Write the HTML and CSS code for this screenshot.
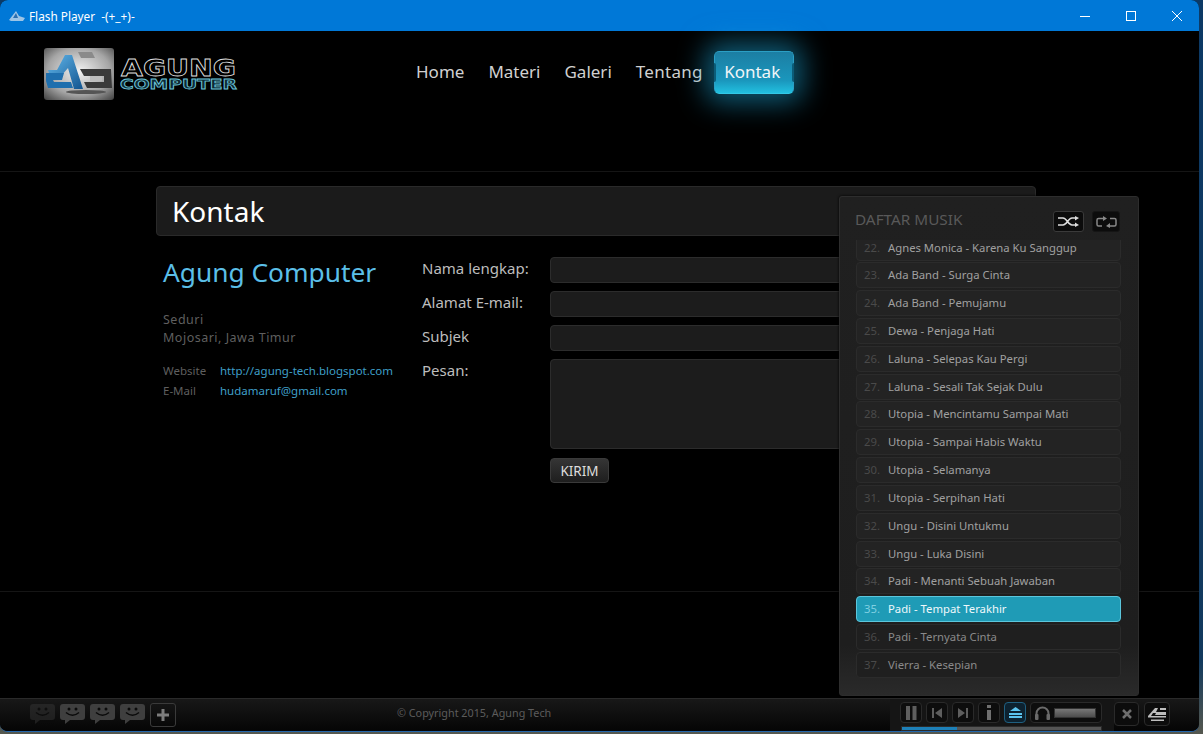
FILE: index.html
```html
<!DOCTYPE html>
<html lang="id">
<head>
<meta charset="utf-8">
<title>Flash Player -(+_+)-</title>
<link rel="stylesheet" href="styles.css">
</head>
<body>
<div class="window">
  <div class="titlebar">
    <svg class="app-icon" width="18" height="12" viewBox="0 0 18 12"><path d="M1 10 L8 1 L11 6 L17 8 L15 11 L3 11Z" fill="#9cc4e6"/><path d="M5 8 L8 3 L10 8Z" fill="#2a6fb0"/></svg>
    <span class="title-text">Flash Player&nbsp; -(+_+)-</span>
    <div class="win-controls">
      <svg width="12" height="12" viewBox="0 0 12 12"><path d="M1 6.5H11" stroke="#fff" fill="none"/></svg>
      <svg width="12" height="12" viewBox="0 0 12 12"><rect x="1.5" y="1.5" width="9" height="9" stroke="#fff" fill="none"/></svg>
      <svg width="12" height="12" viewBox="0 0 12 12"><path d="M1 1L11 11M11 1L1 11" stroke="#fff" fill="none"/></svg>
    </div>
  </div>

  <header class="site-header">
    <div class="logo">
      <svg class="logo-tile" width="70" height="52" viewBox="0 0 70 52">
        <defs>
          <radialGradient id="tile" cx="50%" cy="45%" r="75%"><stop offset="0" stop-color="#f2f2f2"/><stop offset=".6" stop-color="#a5a5a5"/><stop offset="1" stop-color="#3c3c3c"/></radialGradient>
          <linearGradient id="ablue" x1="0" y1="0" x2="1" y2="1"><stop offset="0" stop-color="#62b8ec"/><stop offset="1" stop-color="#12548f"/></linearGradient>
        </defs>
        <rect width="70" height="52" rx="3" fill="url(#tile)"/>
        <path d="M34 4H48L51 10H37Z" fill="#8a8a8a"/>
        <path d="M36 21H67L68 40H43L40 34H60V28H40Z" fill="#3a3a3a"/>
        <path d="M46 28H58V33H46Z" fill="#bdbdbd"/>
        <path d="M21 7H28L39 41H30L24 20L17 28H6L4 22H13Z" fill="url(#ablue)"/>
        <path d="M2 25H20L18 32H9L10 34H27L29 40H4L2 33Z" fill="#1f6fae"/>
        <ellipse cx="42" cy="44" rx="20" ry="2" fill="#555"/>
      </svg>
      <svg class="logo-word" width="118" height="46" viewBox="0 0 118 46">
        <text class="logo-agung" x="1" y="27.500" textLength="115" lengthAdjust="spacingAndGlyphs">AGUNG</text>
        <text class="logo-computer" x="0" y="41" textLength="117" lengthAdjust="spacingAndGlyphs">COMPUTER</text>
      </svg>
    </div>
    <nav class="nav">
      <a>Home</a>
      <a>Materi</a>
      <a>Galeri</a>
      <a>Tentang</a>
      <a class="active">Kontak</a>
    </nav>
  </header>

  <main class="section">
    <h1 class="page-title">Kontak</h1>
    <div class="columns">
      <div class="contact">
        <h2>Agung Computer</h2>
        <p class="address">Seduri<br>Mojosari, Jawa Timur</p>
        <div class="meta"><span>Website</span><a>http://agung-tech.blogspot.com</a></div>
        <div class="meta"><span>E-Mail</span><a>hudamaruf@gmail.com</a></div>
      </div>
      <form class="form">
        <label>Nama lengkap:</label><div class="field"></div>
        <label>Alamat E-mail:</label><div class="field"></div>
        <label>Subjek</label><div class="field"></div>
        <label>Pesan:</label><div class="field area"></div>
        <span></span><div><button type="button" class="send">KIRIM</button></div>
      </form>
    </div>
  </main>

  <div class="spacer"></div>

  <footer class="footer">
    <div class="smileys">
      <svg class="smiley dim" viewBox="0 0 25 20"><use href="#smile"/></svg>
      <svg class="smiley" viewBox="0 0 25 20"><use href="#smile"/></svg>
      <svg class="smiley" viewBox="0 0 25 20"><use href="#smile"/></svg>
      <svg class="smiley" viewBox="0 0 25 20"><use href="#smile"/></svg>
      <div class="plus"><svg width="12" height="12" viewBox="0 0 12 12"><path d="M6 0V12M0 6H12" stroke="#7c7c7c" stroke-width="3"/></svg></div>
    </div>
    <div class="copyright">© Copyright 2015, Agung Tech</div>
    <div class="player">
      <div class="controls">
        <div class="pbtn"><svg width="14" height="14" viewBox="0 0 14 14"><path d="M2 0H6V14H2ZM8.500 0H12.500V14H8.500Z" fill="#5e5e5e"/></svg></div>
        <div class="pbtn w"><svg width="10" height="10" viewBox="0 0 10 10"><path d="M0 0H2V10H0ZM10 0V10L3 5Z" fill="#5e5e5e"/></svg></div>
        <div class="pbtn w"><svg width="10" height="10" viewBox="0 0 10 10"><path d="M0 0L7 5L0 10ZM8 0H10V10H8Z" fill="#5e5e5e"/></svg></div>
        <div class="pbtn w"><svg width="6" height="15" viewBox="0 0 6 15"><path d="M1 0H5V3H1ZM1 5H5V15H1Z" fill="#707070"/></svg></div>
        <div class="pbtn w on"><svg width="13" height="11" viewBox="0 0 13 11"><path d="M6.500 0L12 4H1Z" fill="#5cc3ee"/><path d="M0 6H13V8H0ZM0 9H13V11H0Z" fill="#5cc3ee"/></svg></div>
        <div class="pbtn vol">
          <svg width="15" height="14" viewBox="0 0 15 14"><path d="M1.500 12V7.500a6 6 0 0 1 12 0V12" stroke="#6a6a6a" stroke-width="2" fill="none"/><rect x="0" y="8" width="3.500" height="6" rx="1" fill="#6a6a6a"/><rect x="11.500" y="8" width="3.500" height="6" rx="1" fill="#6a6a6a"/></svg>
          <div class="vol-bar"></div>
        </div>
      </div>
      <div class="progress"><div class="progress-fill"></div></div>
    </div>
    <div class="pbtn side close"><svg width="10" height="10" viewBox="0 0 10 10"><path d="M1 1L9 9M9 1L1 9" stroke="#6e6e6e" stroke-width="2.500"/></svg></div>
    <div class="pbtn side brand"><svg width="20" height="15" viewBox="0 0 20 15"><path d="M1 9L8 1H11L9 5H19V3H13V1H19V8H8L9 6H6L4 9H19V10.500H1ZM4 12.500H17V14H4Z" fill="#bdbdbd"/></svg></div>
  </footer>

  <aside class="music">
    <div class="music-head">
      <span class="music-title">DAFTAR MUSIK</span>
      <div class="mbtn on"><svg width="21" height="11" viewBox="0 0 21 11"><path d="M0 2H5C9 2 10 9 14 9H18M0 9H5C9 9 10 2 14 2H18" stroke="#ddd" stroke-width="1.500" fill="none"/><path d="M17 0L21 2L17 4.500ZM17 6.500L21 9L17 11Z" fill="#ddd"/></svg></div>
      <div class="mbtn"><svg width="21" height="12" viewBox="0 0 21 12"><path d="M8 2.500H2.500Q1 2.500 1 4V8.500Q1 10 2.500 10H6M13 10H18.500Q20 10 20 8.500V4Q20 2.500 18.500 2.500H14" stroke="#888" stroke-width="1.500" fill="none"/><path d="M7 0L11 2.500L7 5ZM14 7L10 10L14 12Z" fill="#888"/></svg></div>
    </div>
    <div class="list-clip">
      <ol class="tracks">
        <li><b>22.</b>Agnes Monica - Karena Ku Sanggup</li>
        <li><b>23.</b>Ada Band - Surga Cinta</li>
        <li><b>24.</b>Ada Band - Pemujamu</li>
        <li><b>25.</b>Dewa - Penjaga Hati</li>
        <li><b>26.</b>Laluna - Selepas Kau Pergi</li>
        <li><b>27.</b>Laluna - Sesali Tak Sejak Dulu</li>
        <li><b>28.</b>Utopia - Mencintamu Sampai Mati</li>
        <li><b>29.</b>Utopia - Sampai Habis Waktu</li>
        <li><b>30.</b>Utopia - Selamanya</li>
        <li><b>31.</b>Utopia - Serpihan Hati</li>
        <li><b>32.</b>Ungu - Disini Untukmu</li>
        <li><b>33.</b>Ungu - Luka Disini</li>
        <li><b>34.</b>Padi - Menanti Sebuah Jawaban</li>
        <li class="current"><b>35.</b>Padi - Tempat Terakhir</li>
        <li><b>36.</b>Padi - Ternyata Cinta</li>
        <li><b>37.</b>Vierra - Kesepian</li>
      </ol>
    </div>
  </aside>
</div>

<svg class="defs" width="0" height="0">
  <symbol id="smile" viewBox="0 0 25 20">
    <path d="M3 0H22Q25 0 25 3V13Q25 16 22 16H10L5 20V16H3Q0 16 0 13V3Q0 0 3 0Z" fill="#3f3f3f"/>
    <circle cx="9" cy="5" r="1.500" fill="#0a0a0a"/><circle cx="16" cy="5" r="1.500" fill="#0a0a0a"/>
    <path d="M6 8.500Q12.500 14 19 8.500" stroke="#0a0a0a" stroke-width="1.500" fill="none"/>
  </symbol>
</svg>
</body>
</html>
```
FILE: styles.css
```css
* { box-sizing: border-box; }
html, body { margin: 0; height: 100%; }
body {
  background: linear-gradient(180deg, #0c3a66, #123a5e 90%, #55584f);
  overflow: hidden;
  font-family: "Noto Sans", "Open Sans", sans-serif;
}
.defs { position: absolute; }
.window {
  position: relative;
  width: 1199px;
  height: 732px;
  background: #000;
  display: flex;
  flex-direction: column;
  border-bottom: 1px solid #2467ad;
  border-radius: 8px;
  overflow: hidden;
}
.titlebar {
  height: 31px;
  flex: none;
  background: #0078d7;
  display: flex;
  align-items: center;
  padding-left: 8px;
  color: #fff;
  font: 11.8px "Noto Sans", sans-serif;
}
.app-icon { margin-right: 3px; }
.win-controls {
  margin-left: auto;
  display: flex;
  gap: 34px;
  padding-right: 16px;
}
.site-header {
  height: 141px;
  flex: none;
  display: flex;
  align-items: flex-start;
  padding: 17px 0 0 44px;
  border-bottom: 1px solid #151515;
}
.logo { display: flex; width: 372px; flex: none; }
.logo-tile { flex: none; }
.logo-word { margin: 0 0 0 6px; flex: none; }
.logo-agung { font: 700 23px "DejaVu Sans", sans-serif; fill: #000; stroke: #ddd; stroke-width: .8; }
.logo-computer { font: 700 14px "DejaVu Sans", sans-serif; fill: #0d2a35; stroke: #6cc3d8; stroke-width: .8; }
.nav {
  display: flex;
  align-items: center;
  height: 43px;
  margin-top: 3px;
  font-size: 17px;
  color: #d0d0d0;
}
.nav a { margin-right: 24px; padding-bottom: 2px; }
.nav a:nth-child(4) { margin-right: 11px; letter-spacing: .28px; }
.nav .active {
  position: relative;
  width: 80px;
  height: 43px;
  margin: 0;
  padding-right: 3px;
  display: flex;
  align-items: center;
  justify-content: center;
  color: #f2f6f8;
  border-radius: 5px;
  border: 1px solid #2b9fc5;
  border-bottom-color: #33c8e6;
  background: linear-gradient(180deg, #1c7ea3, #1a97bd 70%, #22c0e0);
  box-shadow: 0 0 28px 8px rgba(28, 170, 220, .55);
}
.nav .active::before,
.nav .active::after {
  content: "";
  position: absolute;
  top: 11px;
  bottom: 11px;
  width: 2px;
  background: #0b5c78;
}
.nav .active::before { left: -1px; border-radius: 0 2px 2px 0; }
.nav .active::after { right: -1px; border-radius: 2px 0 0 2px; }
.section {
  height: 420px;
  flex: none;
  padding: 14px 0 0 156px;
  border-bottom: 1px solid #151515;
}
.page-title {
  width: 880px;
  height: 50px;
  margin: 0;
  padding-left: 15px;
  background: #1b1b1b;
  border: 1px solid #2a2a2a;
  border-radius: 4px;
  color: #fff;
  font-size: 28px;
  font-weight: 400;
  line-height: 48px;
}
.columns { display: flex; padding-top: 20px; }
.contact { width: 266px; flex: none; padding-left: 7px; }
.contact h2 {
  margin: 0 0 23px;
  font-size: 26.3px;
  font-weight: 400;
  line-height: 32px;
  color: #5bbfe8;
}
.address {
  margin: 0 0 14px;
  font-size: 12.5px;
  line-height: 18px;
  color: #5f5f5f;
  letter-spacing: .5px;
}
.meta {
  display: flex;
  height: 20px;
  align-items: center;
  padding-bottom: 1px;
  font-size: 11.500px;
  color: #5f5f5f;
}
.meta span { width: 57px; flex: none; }
.meta a { color: #3f9fc8; }
.form {
  display: grid;
  grid-template-columns: 128px 480px;
  grid-auto-rows: min-content;
  row-gap: 8px;
  padding-top: 1px;
  font-size: 15px;
  color: #bdbdbd;
}
.form label { line-height: 22px; }
.field {
  height: 26px;
  background: #1c1c1c;
  border: 1px solid #2c2c2c;
  border-radius: 4px;
}
.field.area { height: 90px; }
.send {
  display: block;
  width: 59px;
  height: 25px;
  margin-top: 1px;
  padding: 0;
  background: linear-gradient(180deg, #353535, #1e1e1e);
  border: 1px solid #3a3a3a;
  border-radius: 4px;
  color: #ddd;
  font: 13.500px "Noto Sans", sans-serif;
}
.spacer { flex: 1; }
.footer {
  height: 33px;
  flex: none;
  display: flex;
  align-items: flex-start;
  padding: 4px 0 0 30px;
  background: linear-gradient(180deg, #181818, #050505);
  border-top: 1px solid #2a2a2a;
}
.smileys { display: flex; gap: 5px; width: 367px; flex: none; }
.smiley { width: 25px; height: 20px; margin-top: 1px; }
.smiley.dim { opacity: .4; }
.plus {
  width: 26px;
  height: 24px;
  display: flex;
  align-items: center;
  justify-content: center;
  border: 1px solid #3a3a3a;
  border-radius: 3px;
}
.copyright { width: 493px; flex: none; font-size: 10.800px; line-height: 20px; color: #5c5c5c; }
.player {
  width: 224px;
  height: 33px;
  flex: none;
  margin-top: -4px;
  padding: 3px 0 0 10px;
  background: #151515;
}
.controls { display: flex; gap: 4px; }
.pbtn {
  width: 22px;
  height: 21px;
  flex: none;
  display: flex;
  align-items: center;
  justify-content: center;
  background: #0d0d0d;
  border: 1px solid #2a2a2a;
  border-radius: 4px;
}
.pbtn.on { background: #0d2230; border-color: #1f5f80; }
.pbtn.vol { width: 72px; justify-content: flex-start; gap: 4px; padding-left: 4px; }
.vol-bar {
  width: 42px;
  height: 10px;
  background: linear-gradient(180deg, #777, #4d4d4d);
  border: 1px solid #333;
}
.progress { width: 201px; height: 5px; margin: 3px 0 0 1px; background: #555; border: 1px solid #2a2a2a; }
.progress-fill { width: 55px; height: 100%; background: #1d80b8; }
.side { width: 25px; height: 24px; margin-top: -1px; background: #0c0c0c; }
.brand { width: 26px; margin-left: 5px; }
.music {
  position: absolute;
  left: 839px;
  top: 196px;
  width: 300px;
  height: 500px;
  padding: 14px 18px 0 16px;
  background: linear-gradient(180deg, #202020, #1e1e1e 90%, #2a2a2a);
  border: 1px solid #2d2d2d;
  border-radius: 3px;
  box-shadow: 0 0 3px #000;
}
.music-head { display: flex; align-items: center; height: 21px; }
.music-title { flex: 1; margin-left: -1px; padding-bottom: 5px; font-size: 15.300px; color: #595959; }
.mbtn {
  width: 31px;
  height: 21px;
  display: flex;
  align-items: center;
  justify-content: center;
  background: #0c0c0c;
  border: 1px solid #3a3a3a;
  border-radius: 3px;
}
.mbtn + .mbtn { width: 28px; margin: 0 0 0 8px; border-color: #151515; }
.list-clip { margin-top: 8px; width: 265px; height: 438px; overflow: hidden; }
.tracks {
  list-style: none;
  margin: -5.500px 0 0;
  padding: 0;
  display: flex;
  flex-direction: column;
  gap: 1.830px;
}
.tracks li {
  height: 26px;
  flex: none;
  display: flex;
  align-items: center;
  padding: 0 0 1px 7px;
  background: #232323;
  border: 1px solid #2b2b2b;
  border-radius: 4px;
  font-size: 11.300px;
  color: #a0a0a0;
}
.tracks li:nth-last-child(-n+2) { background: #1f1f1f; color: #8a8a8a; }
.tracks b { width: 24px; flex: none; font-weight: 400; color: #4a4a4a; }
.tracks .current {
  background: #1f9bb6;
  border-color: #5cc6dc;
  color: #eef8fb;
}
.tracks .current b { color: #7fd0e2; }
```
